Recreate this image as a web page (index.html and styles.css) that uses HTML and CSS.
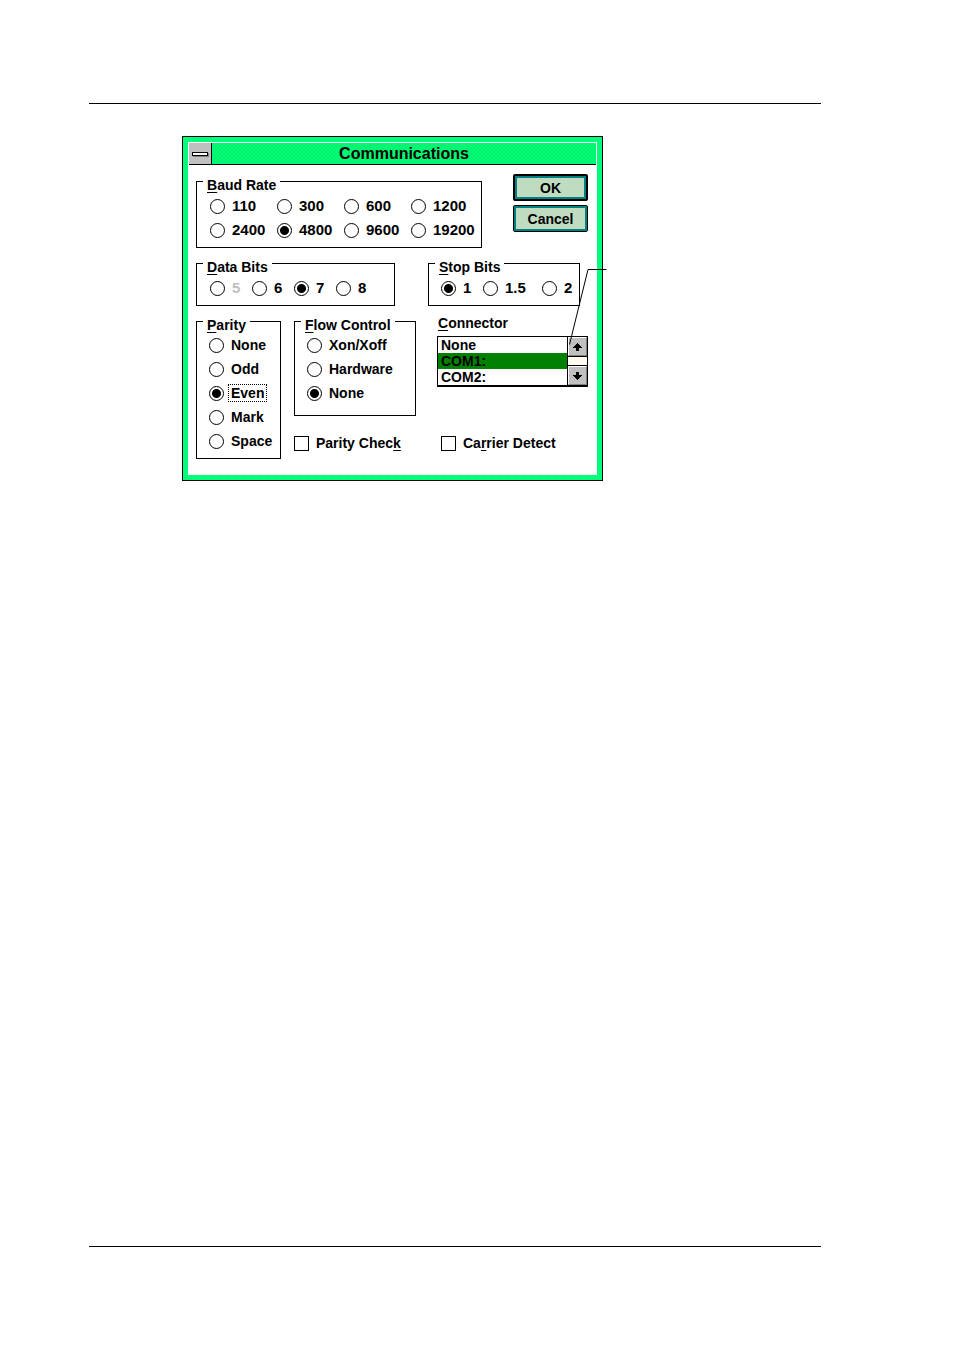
FILE: index.html
```html
<!DOCTYPE html>
<html lang="en">
<head>
    <meta charset="UTF-8">
    <meta name="viewport" content="width=device-width, initial-scale=1.0">
    <title>Communications</title>
    <link rel="stylesheet" href="styles.css">
</head>
<body>
    <main class="page">
        <form class="dialog">
            <div class="window">
                <header class="titlebar">
                    <button type="button" class="sysmenu" aria-label="Control menu"><span class="dash"></span></button>
                    <h1>Communications</h1>
                </header>

                <div class="content">
                    <div class="row row-baud">
                        <fieldset class="group">
                            <legend><u>B</u>aud Rate</legend>
                            <div class="options baud">
                                <label><input type="radio" name="baud">110</label>
                                <label><input type="radio" name="baud">300</label>
                                <label><input type="radio" name="baud">600</label>
                                <label><input type="radio" name="baud">1200</label>
                                <label><input type="radio" name="baud">2400</label>
                                <label><input type="radio" name="baud" checked>4800</label>
                                <label><input type="radio" name="baud">9600</label>
                                <label><input type="radio" name="baud">19200</label>
                            </div>
                        </fieldset>
                        <div class="actions">
                            <button type="submit" class="btn btn-default">OK</button>
                            <button type="button" class="btn">Cancel</button>
                        </div>
                    </div>

                    <div class="row row-bits">
                        <fieldset class="group">
                            <legend><u>D</u>ata Bits</legend>
                            <div class="options data-bits">
                                <label class="disabled"><input type="radio" name="data" disabled>5</label>
                                <label><input type="radio" name="data">6</label>
                                <label><input type="radio" name="data" checked>7</label>
                                <label><input type="radio" name="data">8</label>
                            </div>
                        </fieldset>
                        <fieldset class="group">
                            <legend><u>S</u>top Bits</legend>
                            <div class="options stop-bits">
                                <label><input type="radio" name="stop" checked>1</label>
                                <label><input type="radio" name="stop">1.5</label>
                                <label><input type="radio" name="stop">2</label>
                            </div>
                        </fieldset>
                    </div>

                    <div class="row row-bottom">
                        <fieldset class="group parity">
                            <legend><u>P</u>arity</legend>
                            <div class="options stacked">
                                <label><input type="radio" name="parity">None</label>
                                <label><input type="radio" name="parity">Odd</label>
                                <label><input type="radio" name="parity" checked><span class="focused">Even</span></label>
                                <label><input type="radio" name="parity">Mark</label>
                                <label><input type="radio" name="parity">Space</label>
                            </div>
                        </fieldset>
                        <fieldset class="group flow">
                            <legend><u>F</u>low Control</legend>
                            <div class="options stacked">
                                <label><input type="radio" name="flow">Xon/Xoff</label>
                                <label><input type="radio" name="flow">Hardware</label>
                                <label><input type="radio" name="flow" checked>None</label>
                            </div>
                        </fieldset>
                        <div class="connector">
                            <label for="connector"><u>C</u>onnector</label>
                            <div class="listbox">
                                <select id="connector" size="3">
                                    <option>None</option>
                                    <option selected>COM1:</option>
                                    <option>COM2:</option>
                                </select>
                                <div class="scrollbar">
                                    <button type="button" aria-label="Scroll up">
                                        <svg viewBox="0 0 9 8" width="9" height="8"><path d="M4 0h1v1h1v1h1v1h1v1h1v1H6v3H3V5H0V4h1V3h1V2h1V1h1z"/></svg>
                                    </button>
                                    <button type="button" aria-label="Scroll down">
                                        <svg viewBox="0 0 9 8" width="9" height="8"><path d="M4 8h1V7h1V6h1V5h1V4h1V3H6V0H3v3H0v1h1v1h1v1h1v1h1z"/></svg>
                                    </button>
                                </div>
                            </div>
                        </div>
                        <label class="check"><input type="checkbox"><span>Parity Chec<u>k</u></span></label>
                        <label class="check carrier"><input type="checkbox"><span>Ca<u>r</u>rier Detect</span></label>
                    </div>
                </div>
            </div>

            <!-- leader line pointing at the connector list -->
            <svg class="leader" viewBox="0 0 38 77" width="38" height="77"><path d="M37.500 .5H19L.5 75.500"/></svg>
        </form>
    </main>
</body>
</html>
```
FILE: styles.css
```css
:root {
    --ink: #000;
    --green-a: #00ff66;
    --green-b: #00ff8c;
    --teal: #008080;
    --button: #c0dcc0;
    --grey: #c0c0c0;
    --shadow: #808080;
}

* {
    margin: 0;
    padding: 0;
    box-sizing: border-box;
}

body {
    min-height: 100vh;
    display: flex;
    padding: 103px 133px 104px 89px;
    background: #fff;
    color: var(--ink);
    font: bold 14px/16px "Liberation Sans", Arial, sans-serif;
}

.page {
    flex: 1;
    padding: 32px 0 32px 93px;
    border-top: 1px solid var(--ink);
    border-bottom: 1px solid var(--ink);
}

button, select {
    font: inherit;
    color: inherit;
}

u {
    text-underline-offset: 2px;
    text-decoration-thickness: 1px;
    text-decoration-skip-ink: none;
}

/* Window frame */
.dialog {
    position: relative;
    max-width: 421px;
    padding: 5px;
    border: 1px solid var(--ink);
    background: repeating-conic-gradient(var(--green-a) 0 25%, var(--green-b) 0 50%) 0 0 / 2px 2px;
}

.window {
    padding: 1px;
    background: #fff;
}

.titlebar {
    display: flex;
    height: 22px;
    border-bottom: 1px solid var(--ink);
    background: repeating-conic-gradient(#00ff66 0 25%, #00f080 0 50%) 0 0 / 4px 4px;
}

.titlebar h1 {
    flex: 1;
    font-size: 16px;
    line-height: 22px;
    text-align: center;
}

.sysmenu {
    width: 23px;
    display: flex;
    align-items: center;
    justify-content: center;
    border: 0;
    border-right: 1px solid var(--ink);
    background: var(--grey);
}

.dash {
    width: 16px;
    height: 4px;
    border: 1px solid var(--ink);
    background: #fff;
    box-shadow: 1px 1px var(--shadow);
}

.content {
    display: flex;
    flex-direction: column;
    gap: 3px;
    padding: 4px 8px 15px 7px;
}

.row {
    display: grid;
}

.row-baud {
    grid-template-columns: 286fr 75fr;
    column-gap: 31px;
}

.row-bits {
    grid-template-columns: 199fr 152fr;
    column-gap: 33px;
    padding-right: 8px;
}

.row-bottom {
    grid-template-columns: 85fr 13fr 122fr 21fr 151fr;
    grid-template-rows: auto 1fr;
}

/* Option groups */
.group {
    min-width: 0;
    padding: 0 0 5px 6px;
    border: 1px solid var(--ink);
}

.group legend {
    padding: 8px 4px 0;
}

.options {
    display: grid;
    padding: 1px 0 0 7px;
    font-size: 15px;
}

.options label {
    display: flex;
    align-items: center;
    gap: 7px;
    height: 24px;
}

.baud {
    grid-template-columns: repeat(4, 67px);
}

.data-bits {
    grid-template-columns: repeat(4, 42px);
}

.stop-bits {
    grid-template-columns: 42px 59px 1fr;
    padding-left: 6px;
}

.stacked {
    padding: 0 0 0 6px;
    font-size: 14px;
}

.disabled {
    color: var(--grey);
}

.focused {
    margin: 0 -3px;
    padding: 0 2px;
    border: 1px dotted var(--ink);
}

input {
    appearance: none;
    flex: none;
    width: 15px;
    height: 15px;
    border: 1px solid var(--ink);
    background: #fff;
}

input[type="radio"] {
    border-radius: 50%;
}

input[type="radio"]:checked {
    background: radial-gradient(circle, var(--ink) 4px, #fff 5px);
}

.parity {
    grid-area: 1 / 1 / 3 / 2;
}

.flow {
    grid-area: 1 / 3;
    padding-bottom: 10px;
}

/* Buttons */
.actions {
    display: flex;
    flex-direction: column;
    gap: 4px;
    padding-top: 5px;
}

.btn {
    height: 27px;
    border: 1px solid var(--ink);
    border-radius: 2px;
    background: var(--button);
    box-shadow: inset 0 0 0 2px var(--teal);
}

.btn-default {
    border-width: 2px;
}

/* Connector list */
.connector {
    grid-area: 1 / 5;
    padding-top: 6px;
}

.connector label {
    display: block;
    padding-left: 1px;
}

.listbox {
    display: flex;
    margin-top: 5px;
    border: 1px solid var(--ink);
    border-bottom-width: 2px;
}

.listbox select {
    flex: 1;
    min-width: 0;
    height: 48px;
    border: 0;
    border-radius: 0;
    outline: 0;
    background: #fff;
    overflow: hidden;
    scrollbar-width: none;
}

.listbox option {
    height: 16px;
    min-height: 16px;
    padding: 0 3px;
    font-weight: bold;
    line-height: 16px;
    color: var(--ink);
}

.listbox option:checked {
    color: var(--ink);
    background: linear-gradient(#008000, #008000);
}

.scrollbar {
    width: 20px;
    display: flex;
    flex-direction: column;
    justify-content: space-between;
    border-left: 1px solid var(--ink);
    background: #fffbf0;
}

.scrollbar button {
    height: 19px;
    display: flex;
    align-items: center;
    justify-content: center;
    border: 1px solid var(--shadow);
    border-top-color: #fff;
    border-left-color: #fff;
    background: var(--grey);
    outline: 1px solid var(--ink);
}

/* Check boxes */
.check {
    grid-area: 2 / 3;
    align-self: start;
    display: flex;
    align-items: center;
    gap: 7px;
    padding-top: 19px;
    white-space: nowrap;
}

.carrier {
    grid-area: 2 / 5;
    padding-left: 4px;
}

.leader {
    position: absolute;
    top: 132px;
    right: -5px;
    fill: none;
    stroke: var(--ink);
}
```
